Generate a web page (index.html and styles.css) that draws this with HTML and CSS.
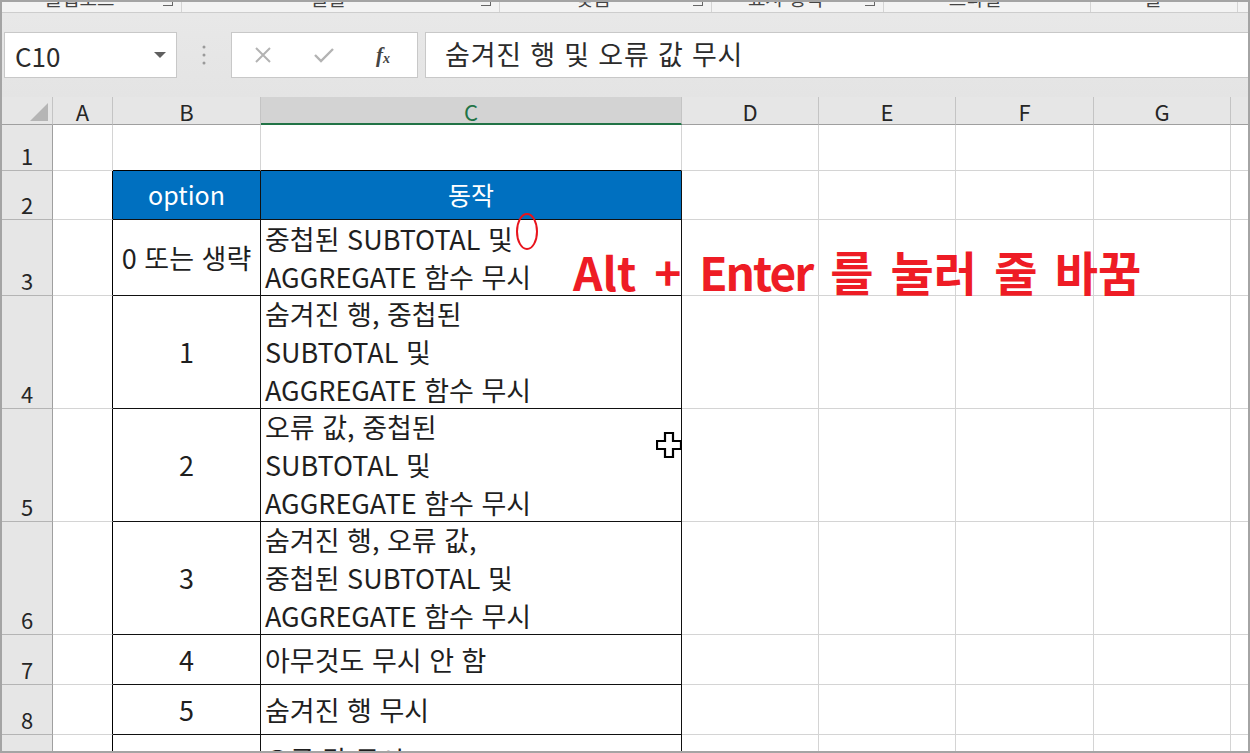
FILE: index.html
```html
<!DOCTYPE html>
<html lang="ko">
  <head>
    <meta charset="UTF-8" />
    <meta name="viewport" content="width=device-width, initial-scale=1.0" />
    <title>AGGREGATE option</title>
    <link rel="stylesheet" href="styles.css">
  </head>
  <body>
    <div class="window">
      <!-- bottom edge of the ribbon, cut off by the capture -->
      <div class="ribbon-tail">
        <div class="rgroup"><span class="rlabel">클립보드</span><span class="launcher"></span></div>
        <div class="rgroup"><span class="rlabel">글꼴</span><span class="launcher"></span></div>
        <div class="rgroup"><span class="rlabel">맞춤</span><span class="launcher"></span></div>
        <div class="rgroup"><span class="rlabel">표시 형식</span><span class="launcher"></span></div>
        <div class="rgroup"><span class="rlabel">스타일</span></div>
        <div class="rgroup"><span class="rlabel">셀</span></div>
        <div class="rgroup last"></div>
      </div>

      <div class="formula-bar">
        <div class="name-box">
          <span>C10</span>
          <svg width="12" height="6" viewBox="0 0 12 6"><polygon points="0,0 12,0 6,6" fill="#5f5f5f" /></svg>
        </div>
        <div class="grip">
          <svg width="4" height="20" viewBox="0 0 4 20">
            <circle cx="2" cy="2" r="1.5" fill="#9a9a9a" />
            <circle cx="2" cy="10" r="1.5" fill="#9a9a9a" />
            <circle cx="2" cy="18" r="1.5" fill="#9a9a9a" />
          </svg>
        </div>
        <div class="fx-box">
          <svg width="18" height="18" viewBox="0 0 18 18"><path d="M2 2 L16 16 M16 2 L2 16" stroke="#b3b3b3" stroke-width="2" /></svg>
          <svg width="20" height="16" viewBox="0 0 20 16"><path d="M1 8 L7 14 L19 2" stroke="#b3b3b3" stroke-width="2.4" fill="none" /></svg>
          <span class="fx">f<sub>x</sub></span>
        </div>
        <div class="formula-input">숨겨진 행 및 오류 값 무시</div>
      </div>

      <div class="sheet">
        <div class="grid">
          <!-- column headers -->
          <div class="c ch corner">
            <svg width="18" height="18" viewBox="0 0 18 18"><polygon points="18,0 18,18 0,18" fill="#b5b5b5" /></svg>
          </div>
          <div class="c ch">A</div>
          <div class="c ch">B</div>
          <div class="c ch sel">C</div>
          <div class="c ch">D</div>
          <div class="c ch">E</div>
          <div class="c ch">F</div>
          <div class="c ch">G</div>
          <div class="c ch end"></div>

          <!-- row 1 -->
          <div class="c rh">1</div>
          <div class="c"></div>
          <div class="c bt"></div>
          <div class="c bt"></div>
          <div class="c"></div><div class="c"></div><div class="c"></div><div class="c"></div>
          <div class="c end"></div>

          <!-- row 2 -->
          <div class="c rh">2</div>
          <div class="c bl"></div>
          <div class="c t hd">option</div>
          <div class="c t hd">동작</div>
          <div class="c"></div><div class="c"></div><div class="c"></div><div class="c"></div>
          <div class="c end"></div>

          <!-- row 3 -->
          <div class="c rh">3</div>
          <div class="c bl"></div>
          <div class="c t opt">0 또는 생략</div>
          <div class="c t desc">중첩된 SUBTOTAL 및<br>AGGREGATE 함수 무시</div>
          <div class="c"></div><div class="c"></div><div class="c"></div><div class="c"></div>
          <div class="c end"></div>

          <!-- row 4 -->
          <div class="c rh">4</div>
          <div class="c bl"></div>
          <div class="c t opt">1</div>
          <div class="c t desc">숨겨진 행, 중첩된<br>SUBTOTAL 및<br>AGGREGATE 함수 무시</div>
          <div class="c"></div><div class="c"></div><div class="c"></div><div class="c"></div>
          <div class="c end"></div>

          <!-- row 5 -->
          <div class="c rh">5</div>
          <div class="c bl"></div>
          <div class="c t opt">2</div>
          <div class="c t desc">오류 값, 중첩된<br>SUBTOTAL 및<br>AGGREGATE 함수 무시</div>
          <div class="c"></div><div class="c"></div><div class="c"></div><div class="c"></div>
          <div class="c end"></div>

          <!-- row 6 -->
          <div class="c rh">6</div>
          <div class="c bl"></div>
          <div class="c t opt">3</div>
          <div class="c t desc">숨겨진 행, 오류 값,<br>중첩된 SUBTOTAL 및<br>AGGREGATE 함수 무시</div>
          <div class="c"></div><div class="c"></div><div class="c"></div><div class="c"></div>
          <div class="c end"></div>

          <!-- row 7 -->
          <div class="c rh">7</div>
          <div class="c bl"></div>
          <div class="c t opt">4</div>
          <div class="c t desc">아무것도 무시 안 함</div>
          <div class="c"></div><div class="c"></div><div class="c"></div><div class="c"></div>
          <div class="c end"></div>

          <!-- row 8 -->
          <div class="c rh">8</div>
          <div class="c bl"></div>
          <div class="c t opt">5</div>
          <div class="c t desc">숨겨진 행 무시</div>
          <div class="c"></div><div class="c"></div><div class="c"></div><div class="c"></div>
          <div class="c end"></div>

          <!-- row 9 -->
          <div class="c rh">9</div>
          <div class="c bl"></div>
          <div class="c t opt">6</div>
          <div class="c t desc">오류 값 무시</div>
          <div class="c"></div><div class="c"></div><div class="c"></div><div class="c"></div>
          <div class="c end"></div>
        </div>

        <!-- annotations drawn over the sheet -->
        <div class="mark"></div>
        <div class="note">Alt + <span class="en">Enter</span> <span class="ko">를 눌러 줄 바꿈</span></div>
        <svg class="cursor" width="26" height="26" viewBox="0 0 26 26">
          <polygon points="9,1 17,1 17,9 25,9 25,17 17,17 17,25 9,25 9,17 1,17 1,9 9,9" fill="#fff" stroke="#000" stroke-width="2.2" />
        </svg>
      </div>
    </div>
  </body>
</html>
```

FILE: styles.css
```css
* {
  margin: 0;
  padding: 0;
  box-sizing: border-box;
}

body {
  width: 1250px;
  height: 753px;
  overflow: hidden;
  font-family: "Noto Sans CJK KR", sans-serif;
  color: #1f1f1f;
}

.window {
  width: 1250px;
  height: 753px;
  border: 2px solid #a4a4a4;
  display: flex;
  flex-direction: column;
  background: #e6e6e6;
}

/* ribbon remnant */
.ribbon-tail {
  height: 11px;
  flex: none;
  background: #f3f3f3;
  border-bottom: 1px solid #cdcdcd;
  overflow: hidden;
  display: grid;
  grid-template-columns: 180px 318px 212px 172px 207px 147px 1fr;
}

.rgroup {
  display: flex;
  align-items: flex-start;
  justify-content: center;
  position: relative;
  border-right: 1px solid #d4d4d4;
  padding-right: 24px;
}

.rgroup.last {
  border-right: none;
}

.rlabel {
  font-size: 19px;
  line-height: 20px;
  margin-top: -14px;
  color: #444;
  white-space: nowrap;
}

.launcher {
  position: absolute;
  right: 8px;
  top: -6px;
  width: 10px;
  height: 10px;
  border-right: 1px solid #666;
  border-bottom: 1px solid #666;
}

/* formula bar */
.formula-bar {
  height: 84px;
  flex: none;
  display: flex;
  align-items: flex-start;
  padding: 19px 0 0 2px;
  background: linear-gradient(#e8e8e8, #e4e4e4);
}

.name-box {
  width: 173px;
  height: 46px;
  background: #fff;
  border: 1px solid #c8c8c8;
  display: flex;
  align-items: center;
  justify-content: space-between;
  padding: 0 10px 0 10px;
  font-size: 26px;
  color: #2b2b2b;
}

.grip {
  width: 54px;
  height: 46px;
  display: flex;
  align-items: center;
  justify-content: center;
}

.fx-box {
  width: 187px;
  height: 46px;
  background: #fff;
  border: 1px solid #c8c8c8;
  display: flex;
  align-items: center;
  gap: 42px;
  padding-left: 22px;
}

.fx {
  font-family: "Liberation Serif", serif;
  font-style: italic;
  font-weight: bold;
  font-size: 21px;
  color: #444;
  line-height: 1;
}

.fx sub {
  font-size: 14px;
  vertical-align: -1px;
}

.formula-input {
  flex: 1;
  height: 46px;
  margin-left: 7px;
  background: #fff;
  border: 1px solid #c8c8c8;
  border-right: none;
  padding-left: 19px;
  font-size: 27px;
  letter-spacing: 0.8px;
  line-height: 42px;
  color: #2b2b2b;
}

/* sheet */
.sheet {
  position: relative;
  flex: 1;
  overflow: hidden;
  background: #fff;
}

.grid {
  display: grid;
  grid-template-columns: 51px 60px 148px 421px 137px 137px 138px 137px 1fr;
  grid-template-rows: 28px 46px 49px 76px 113px 113px 113px 50px 50px 50px;
}

.c {
  border-right: 1px solid #d4d4d4;
  border-bottom: 1px solid #d4d4d4;
  background: #fff;
}

.c.end {
  border-right: none;
}

.ch {
  background: #e6e6e6;
  border-right: 1px solid #c4c4c4;
  border-bottom: 1px solid #9f9f9f;
  text-align: center;
  font-size: 22px;
  line-height: 28px;
  color: #262626;
}

.ch.sel {
  background: #d3d3d3;
  color: #217346;
  border-bottom: 2px solid #217346;
}

.corner {
  display: flex;
  align-items: flex-end;
  justify-content: flex-end;
  padding: 0 4px 3px 0;
}

.rh {
  background: #e6e6e6;
  border-right: 1px solid #9f9f9f;
  border-bottom: 1px solid #b4b4b4;
  display: flex;
  align-items: flex-end;
  justify-content: center;
  font-size: 22px;
  line-height: 30px;
  color: #262626;
}

.bl {
  border-right-color: #000;
}

.bt {
  border-bottom-color: #000;
}

.t {
  border-right: 1px solid #111;
  border-bottom: 1px solid #111;
  font-size: 27px;
  line-height: 37.7px;
  display: flex;
  align-items: center;
  white-space: nowrap;
}

.hd {
  background: #0070c0;
  color: #fff;
  font-size: 25px;
  justify-content: center;
}

.opt {
  justify-content: center;
}

.desc {
  padding-left: 4px;
}

.mark {
  position: absolute;
  left: 514px;
  top: 116px;
  width: 22px;
  height: 37px;
  border: 2px solid #e8141c;
  border-radius: 50%;
}

.note {
  position: absolute;
  left: 571px;
  top: 151px;
  font-size: 46px;
  font-weight: bold;
  line-height: 46px;
  word-spacing: 5px;
  color: #ee1c25;
  white-space: nowrap;
}

.note .en {
  letter-spacing: -2px;
}

.note .ko {
  font-size: 47px;
  word-spacing: 4px;
}

.cursor {
  position: absolute;
  left: 654px;
  top: 335px;
}
```
